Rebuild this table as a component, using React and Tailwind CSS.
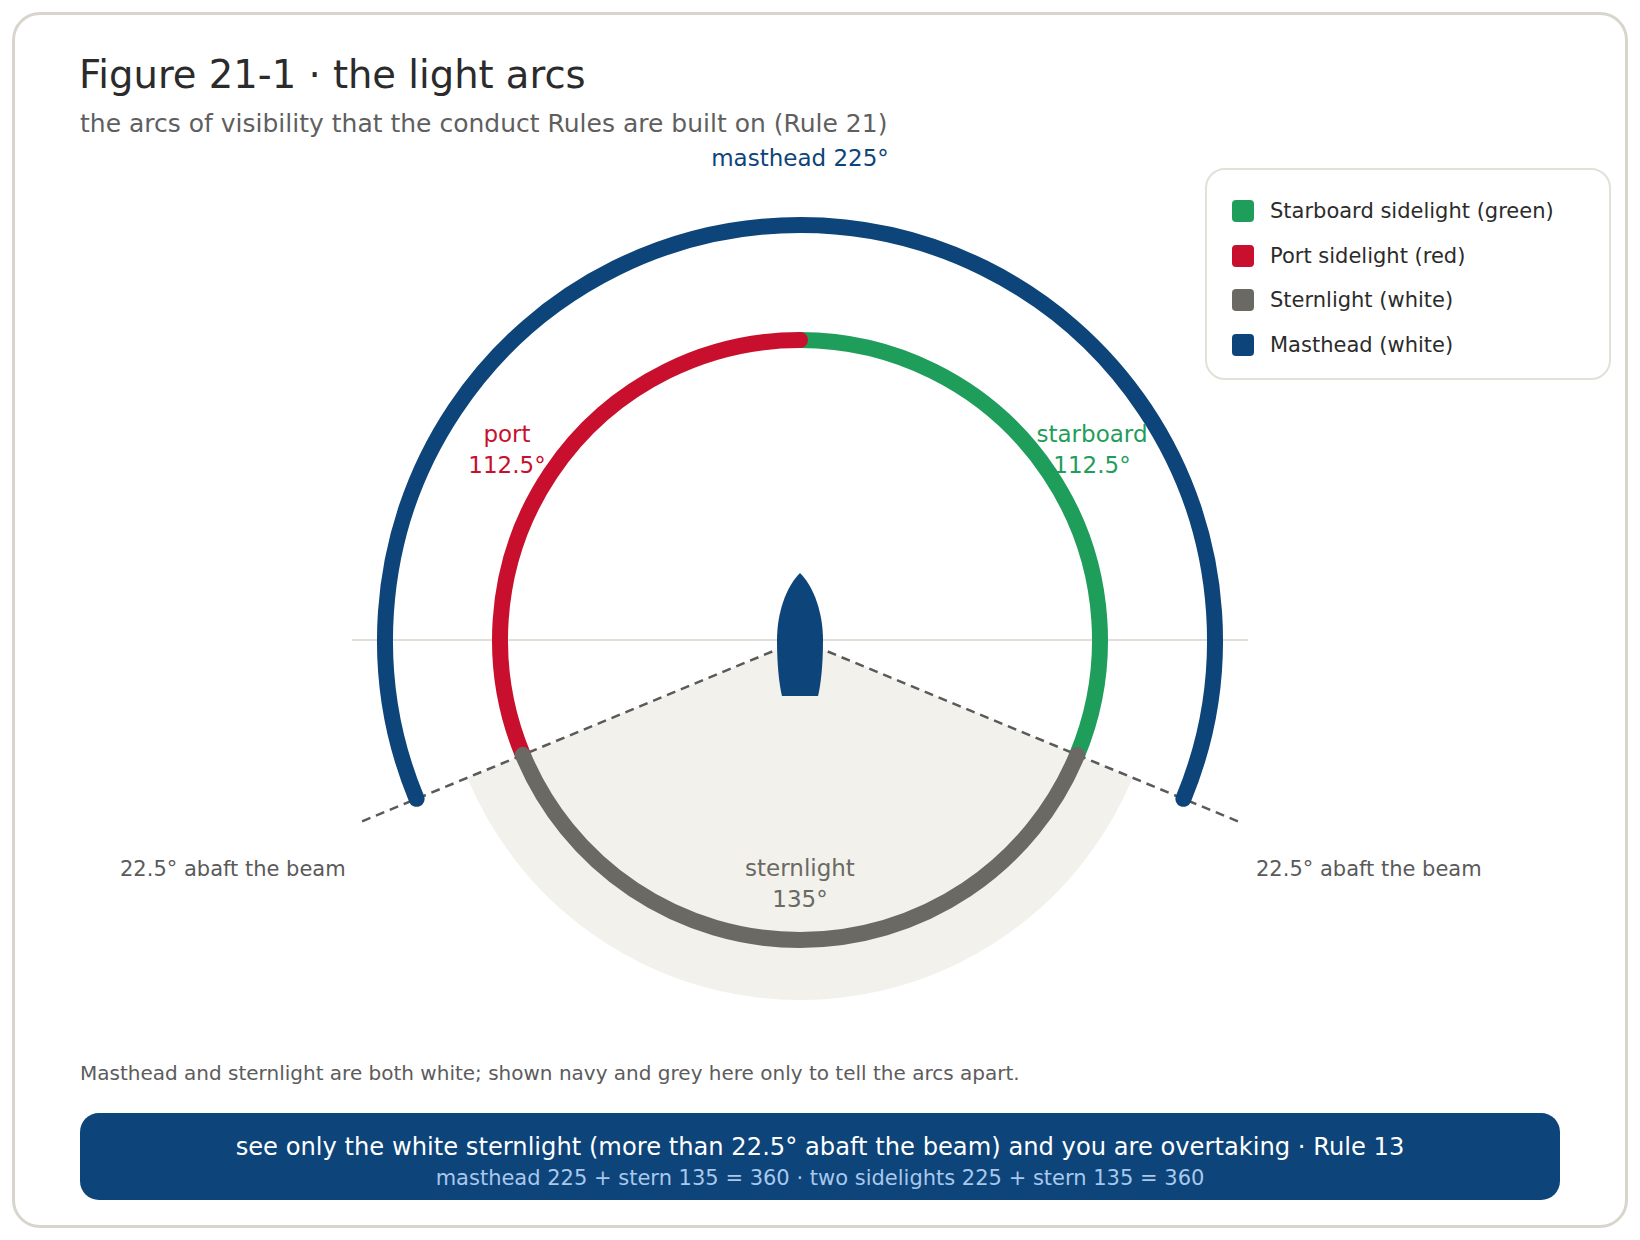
import React from "react";

const CX = 800;
const CY = 640;

// point on a circle, bearing measured clockwise from the bow (up)
const pt = (r, deg) => {
  const a = (deg * Math.PI) / 180;
  return [CX + r * Math.sin(a), CY - r * Math.cos(a)];
};

const arc = (r, from, to, large = 0) => {
  const [x1, y1] = pt(r, from);
  const [x2, y2] = pt(r, to);
  return `M ${x1} ${y1} A ${r} ${r} 0 ${large} 1 ${x2} ${y2}`;
};

const legend = [
  { label: "Starboard sidelight (green)", color: "bg-[#1f9d5a]" },
  { label: "Port sidelight (red)", color: "bg-[#c8102e]" },
  { label: "Sternlight (white)", color: "bg-[#6b6963]" },
  { label: "Masthead (white)", color: "bg-[#0d447a]" },
];

function Diagram() {
  const [sx1, sy1] = pt(360, 112.5);
  const [sx2, sy2] = pt(360, 247.5);
  const [dx1, dy1] = pt(476, 112.5);
  const [dx2, dy2] = pt(476, 247.5);

  return (
    <svg width="1480" height="880" viewBox="80 140 1480 880" className="block">
      {/* sternlight sector */}
      <path d={`M ${CX} ${CY} L ${sx1} ${sy1} A 360 360 0 0 1 ${sx2} ${sy2} Z`} fill="#f2f1ec" />
      {/* beam line */}
      <line x1="352" y1={CY} x2="1248" y2={CY} stroke="#e2ded5" strokeWidth="2" />
      {/* 22.5 abaft the beam */}
      <line x1={CX} y1={CY} x2={dx1} y2={dy1} stroke="#5a5a5a" strokeWidth="2.5" strokeDasharray="9 6" />
      <line x1={CX} y1={CY} x2={dx2} y2={dy2} stroke="#5a5a5a" strokeWidth="2.5" strokeDasharray="9 6" />

      <g fill="none" strokeWidth="16" strokeLinecap="round">
        <path d={arc(300, 0, 112.5)} stroke="#1f9d5a" />
        <path d={arc(300, 247.5, 360)} stroke="#c8102e" />
        <path d={arc(300, 112.5, 247.5)} stroke="#6b6963" />
        <path d={arc(415, 247.5, 112.5, 1)} stroke="#0d447a" />
      </g>

      {/* own vessel */}
      <path
        d="M 800 573 C 814 587, 823 613, 823 640 C 823 664, 821 684, 818 696 L 782 696 C 779 684, 777 664, 777 640 C 777 613, 786 587, 800 573 Z"
        fill="#0d447a"
      />

      <g fontSize="23" textAnchor="middle">
        <text x="800" y="166" fill="#0d447a">masthead 225°</text>
        <text x="507" y="442" fill="#c8102e">port</text>
        <text x="507" y="473" fill="#c8102e">112.5°</text>
        <text x="1092" y="442" fill="#1f9d5a">starboard</text>
        <text x="1092" y="473" fill="#1f9d5a">112.5°</text>
        <text x="800" y="876" fill="#6b6963">sternlight</text>
        <text x="800" y="907" fill="#6b6963">135°</text>
      </g>
      <g fontSize="21" fill="#5a5a5a">
        <text x="120" y="876">22.5° abaft the beam</text>
        <text x="1256" y="876">22.5° abaft the beam</text>
      </g>
    </svg>
  );
}

export default function App() {
  return (
    <div className="w-[1640px] h-[1240px] bg-white p-3 font-['DejaVu_Sans','Liberation_Sans',sans-serif]">
      <div className="h-full rounded-[28px] border-[3px] border-[#d8d6cc] px-[65px] pt-[37px]">
        <h1 className="-ml-px text-[38.5px] leading-[46px] text-[#2b2b2b]">Figure 21-1 · the light arcs</h1>
        <p className="mt-[10px] text-[25px] leading-[32px] text-[#5f5f5f]">
          the arcs of visibility that the conduct Rules are built on (Rule 21)
        </p>

        <div className="relative">
          <Diagram />
          <div className="absolute left-[1125px] top-[28px] w-[406px] h-[212px] rounded-[20px] border-2 border-[#e3e0d6] bg-white pl-[25px] pt-[30px] flex flex-col gap-[22.5px]">
            {legend.map((item) => (
              <div key={item.label} className="flex items-center gap-4 h-[22px]">
                <span className={`w-[22px] h-[22px] rounded-[4px] ${item.color}`} />
                <span className="text-[21px] leading-[22px] text-[#2b2b2b]">{item.label}</span>
              </div>
            ))}
          </div>
        </div>

        <p className="mt-[40px] text-[20px] leading-[26px] text-[#5c5c5c]">
          Masthead and sternlight are both white; shown navy and grey here only to tell the arcs apart.
        </p>

        <div className="mt-[27px] h-[87px] rounded-[19px] bg-[#0d447a] pt-[19px] flex flex-col items-center">
          <div className="text-[24.2px] leading-[30px] text-white">
            see only the white sternlight (more than 22.5° abaft the beam) and you are overtaking · Rule 13
          </div>
          <div className="mt-[2px] text-[21px] leading-[28px] text-[#a8c8ec]">
            masthead 225 + stern 135 = 360 · two sidelights 225 + stern 135 = 360
          </div>
        </div>
      </div>
    </div>
  );
}
